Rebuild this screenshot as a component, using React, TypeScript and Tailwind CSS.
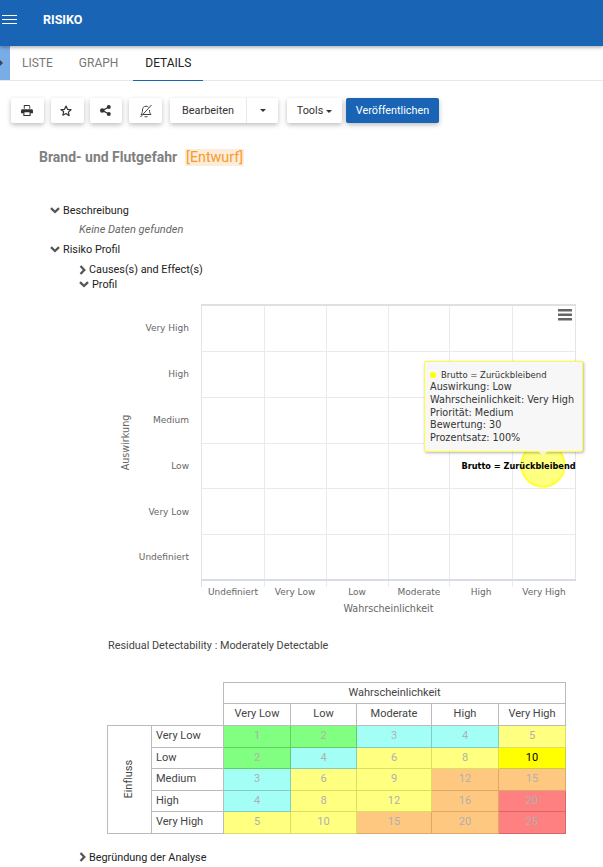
import React from 'react';

const cellColors: Record<string, string> = {
  g: 'bg-[#80ff80] border-[#66cc66]',
  c: 'bg-[#a3fff5] border-[#82ccc4]',
  y: 'bg-[#ffff80] border-[#dddd66]',
  o: 'bg-[#ffc880] border-[#dda866]',
  r: 'bg-[#ff8080] border-[#d96666]',
};

const columns = ['Very Low', 'Low', 'Moderate', 'High', 'Very High'];

const matrix: { label: string; cells: [number, string][] }[] = [
  { label: 'Very Low', cells: [[1, 'g'], [2, 'g'], [3, 'c'], [4, 'c'], [5, 'y']] },
  { label: 'Low', cells: [[2, 'g'], [4, 'c'], [6, 'y'], [8, 'y'], [10, 'x']] },
  { label: 'Medium', cells: [[3, 'c'], [6, 'y'], [9, 'y'], [12, 'o'], [15, 'o']] },
  { label: 'High', cells: [[4, 'c'], [8, 'y'], [12, 'y'], [16, 'o'], [20, 'r']] },
  { label: 'Very High', cells: [[5, 'y'], [10, 'y'], [15, 'o'], [20, 'o'], [25, 'r']] },
];

const colWidths = ['w-[67px]', 'w-[66px]', 'w-[75px]', 'w-[67px]', 'w-[67px]'];

const yLabels: [string, number][] = [
  ['Very High', 328],
  ['High', 374],
  ['Medium', 420],
  ['Low', 466],
  ['Very Low', 512],
  ['Undefiniert', 557],
];
const xLabels: [string, number][] = [
  ['Undefiniert', 233],
  ['Very Low', 295],
  ['Low', 357],
  ['Moderate', 419],
  ['High', 481],
  ['Very High', 544],
];
const xGrid = [264, 326, 388, 449, 512];
const yGrid = [351, 397, 443, 488, 534];

const PrintIcon = () => (
  <svg width="12" height="11" viewBox="0 0 13 12" fill="#333">
    <path d="M3 0h6l1 1v3H9V1.2H4V4H3zM1.5 4.5h10A1.5 1.5 0 0 1 13 6v3h-2.5v3h-8V9H0V6a1.500 1.500 0 0 1 1.500-1.500zM3.700 8v2.800h5.600V8z" />
  </svg>
);

const StarIcon = () => (
  <svg width="12" height="12" viewBox="0 0 24 24" fill="none" stroke="#333" strokeWidth="2.4" strokeLinejoin="round">
    <path d="M12 2l3 6.600 7 .8-5.200 4.800 1.400 7.200L12 17l-6.200 3.400 1.400-7.200L2 9.400l7-.8z" />
  </svg>
);

const ShareIcon = () => (
  <svg width="11" height="11" viewBox="0 0 11 11" fill="#333">
    <circle cx="2.200" cy="5.500" r="2.200" />
    <circle cx="8.800" cy="2" r="2" />
    <circle cx="8.800" cy="9" r="2" />
    <path d="M2 5l6.500-3.500.5 1L3 6zM3 5l6 3.500-.5 1L2 6z" />
  </svg>
);

const BellOffIcon = () => (
  <svg width="14" height="14" viewBox="0 0 14 14" fill="none" stroke="#444" strokeWidth="1">
    <path d="M3.500 6c0-2.200 1.300-3.800 3.500-3.800 1 0 1.800.3 2.400.9M10.500 6c0 2.500.5 3.500 1.500 4.500H4M3.500 6c0 2-.5 3.500-1.500 4.500H3.500M5.500 12c.3.700.9 1 1.500 1s1.200-.3 1.500-1" />
    <path d="M1.500 13L12.500 1" />
  </svg>
);

const Caret = () => (
  <span className="inline-block w-0 h-0 border-x-[3px] border-x-transparent border-t-[3px] border-t-[#333]" />
);

const ChevronOpen = () => (
  <svg width="10" height="7" viewBox="0 0 10 7" fill="none" stroke="#555" strokeWidth="2.300" className="mr-[3px] shrink-0">
    <path d="M1 1.200l4 3.800 4-3.800" />
  </svg>
);

const ChevronClosed = () => (
  <svg width="7" height="10" viewBox="0 0 7 10" fill="none" stroke="#555" strokeWidth="2.300" className="mr-[3px] shrink-0">
    <path d="M1.500 1l3.800 4-3.800 4" />
  </svg>
);

const toolButton = 'h-[25px] flex items-center justify-center bg-white rounded-[2px] shadow-[0_2px_5px_rgba(0,0,0,0.26)]';

const TreeRow = ({ open, label, className }: { open: boolean; label: string; className: string }) => (
  <div className={`flex items-center text-[10.850px] leading-[15px] text-[#222] ${className}`}>
    {open ? <ChevronOpen /> : <ChevronClosed />}
    <span>{label}</span>
  </div>
);

const RiskChart = () => (
  <svg width="603" height="340" viewBox="0 296 603 340" className="block" style={{ fontFamily: '"DejaVu Sans", sans-serif' }}>
    {xGrid.map((x) => (
      <line key={x} x1={x + 0.5} y1="306" x2={x + 0.5} y2="587" stroke="#eaeaea" />
    ))}
    {yGrid.map((y) => (
      <line key={y} x1="202" y1={y + 0.5} x2="575" y2={y + 0.5} stroke="#eaeaea" />
    ))}
    <rect x="201.500" y="305.500" width="374" height="274" fill="none" stroke="#e4e4e4" />
    <line x1="201" y1="305" x2="576" y2="305" stroke="#e0e0e0" strokeWidth="2" />
    <line x1="201" y1="580" x2="576" y2="580" stroke="#d8dcea" strokeWidth="2" />
    <line x1="201.500" y1="580" x2="201.500" y2="587" stroke="#d8dcea" />
    {yLabels.map(([t, y]) => (
      <text key={t} x="189" y={y + 3} textAnchor="end" fontSize="9" fill="#666">
        {t}
      </text>
    ))}
    {xLabels.map(([t, x]) => (
      <text key={t} x={x} y="595" textAnchor="middle" fontSize="9" fill="#666">
        {t}
      </text>
    ))}
    <text x="388.500" y="612" textAnchor="middle" fontSize="9.600" fill="#666">
      Wahrscheinlichkeit
    </text>
    <text transform="translate(129 442.500) rotate(-90)" textAnchor="middle" fontSize="9.600" fill="#666">
      Auswirkung
    </text>
    <circle cx="543" cy="465" r="23" fill="#ffff00" fillOpacity="0.2" />
    <circle cx="543" cy="465" r="21.500" fill="#ffff80" stroke="#ffff33" strokeWidth="2" />
    <text x="518.500" y="468.500" textAnchor="middle" fontSize="8.200" fontWeight="bold" fill="#000">
      Brutto = Zurückbleibend
    </text>
    <rect x="558" y="309" width="14" height="2.500" fill="#666" />
    <rect x="558" y="313.500" width="14" height="2.500" fill="#666" />
    <rect x="558" y="318" width="14" height="2.500" fill="#666" />
  </svg>
);

export default function App() {
  return (
    <div className="relative w-[603px] h-[867px] overflow-hidden bg-white font-['Roboto',sans-serif]">
      <header className="relative z-10 h-[46px] bg-[#1a64b5] shadow-[0_1px_4px_rgba(0,0,0,0.4)] flex items-start">
        <div className="w-[15px] ml-[2px] mt-[15px] flex flex-col gap-[3px]">
          <span className="h-px bg-white" />
          <span className="h-px bg-white" />
          <span className="h-px bg-white" />
        </div>
        <span className="ml-[26px] mt-[12px] leading-[15px] text-white text-[12.500px] font-bold">RISIKO</span>
      </header>

      <nav className="flex h-[35px] border-b border-[#e8e8e8]">
        <div className="w-[10px] bg-[#78ade8] flex items-center">
          <span className="w-0 h-0 border-y-[3px] border-y-transparent border-l-[3px] border-l-[#444]" />
        </div>
        <div className="pl-[12px] pr-[24px] flex items-center text-[12px] text-[#777]">LISTE</div>
        <div className="pl-[2px] pr-[15px] flex items-center text-[12px] text-[#777]">GRAPH</div>
        <div className="w-[70px] flex items-center justify-center text-[12px] text-[#222] border-b-[1.500px] border-[#1a64b5] h-[35px]">
          DETAILS
        </div>
      </nav>

      <div className="flex pl-[11px] pt-[17px]">
        <button className={`${toolButton} w-[33px] pr-[2px]`}><PrintIcon /></button>
        <button className={`${toolButton} w-[33px] ml-[7px] pr-[3px]`}><StarIcon /></button>
        <button className={`${toolButton} w-[32px] ml-[6px] pr-[2px]`}><ShareIcon /></button>
        <button className={`${toolButton} w-[33px] ml-[7px]`}><BellOffIcon /></button>
        <div className={`${toolButton} w-[108px] ml-[8px] text-[10.850px] text-[#333]`}>
          <span className="w-[77px] h-full pt-[1px] flex items-center justify-center border-r border-[#e8e8e8]">Bearbeiten</span>
          <span className="flex-1 flex items-center justify-center"><Caret /></span>
        </div>
        <button className={`${toolButton} w-[55px] ml-[9px] pt-[1px] gap-[3px] text-[10.850px] text-[#333]`}>
          Tools <Caret />
        </button>
        <button className={`${toolButton} w-[93px] ml-[4px] pt-[1px] !bg-[#1a64b5] text-white text-[10.850px]`}>
          Veröffentlichen
        </button>
      </div>

      <div className="pl-[39px] mt-[25px] flex items-center h-[18px]">
        <span className="text-[14px] leading-[18px] font-bold text-[#808080]">Brand- und Flutgefahr</span>
        <span className="ml-[8px] px-[1px] text-[14.300px] leading-[17px] bg-[#fdecd8] text-[#f79a2e]">[Entwurf]</span>
      </div>

      <TreeRow open label="Beschreibung" className="ml-[50px] mt-[37px]" />
      <div className="ml-[79px] mt-[4px] text-[11px] leading-[15px] italic text-[#666]">Keine Daten gefunden</div>
      <TreeRow open label="Risiko Profil" className="ml-[50px] mt-[5px]" />
      <TreeRow open={false} label="Causes(s) and Effect(s)" className="ml-[79px] mt-[5px]" />
      <TreeRow open label="Profil" className="ml-[79px] mt-0" />

      <div className="relative mt-[4px]">
        <RiskChart />
        <div className="absolute left-[424px] top-[65px] w-[159px] h-[91px] bg-[#f7f7f7] border border-[#ffff33] rounded-[2px] shadow-[1px_1px_3px_rgba(0,0,0,0.3)] pl-[5px] pt-[7px] text-[9.700px] leading-[12.800px] text-[#333] font-['DejaVu_Sans',sans-serif]">
          <div className="flex items-center h-[12px] text-[8.500px]">
            <span className="w-[6px] h-[6px] rounded-full bg-[#ffff00] mr-[5px]" />
            Brutto = Zurückbleibend
          </div>
          <div>Auswirkung: Low</div>
          <div>Wahrscheinlichkeit: Very High</div>
          <div>Priorität: Medium</div>
          <div>Bewertung: 30</div>
          <div>Prozentsatz: 100%</div>
          <span className="absolute left-[113px] top-[89px] w-0 h-0 border-x-[5px] border-x-transparent border-t-[5px] border-t-[#f7f7c0]" />
        </div>
      </div>

      <div className="ml-[108px] mt-[2px] text-[10.850px] leading-[15px] text-[#444]">
        Residual Detectability : Moderately Detectable
      </div>

      <table className="ml-[107px] mt-[29px] border-collapse table-fixed text-[11px] text-[#444] w-[459px]">
        <colgroup>
          <col className="w-[44px]" />
          <col className="w-[72px]" />
          {colWidths.map((w, i) => (
            <col key={i} className={w} />
          ))}
        </colgroup>
        <thead>
          <tr className="h-[21px]">
            <th colSpan={2} />
            <th colSpan={5} className="border border-[#bbb] font-normal">Wahrscheinlichkeit</th>
          </tr>
          <tr className="h-[22px]">
            <th colSpan={2} />
            {columns.map((c) => (
              <th key={c} className="border border-[#bbb] font-normal">{c}</th>
            ))}
          </tr>
        </thead>
        <tbody>
          {matrix.map((row, i) => (
            <tr key={row.label} className="h-[21.500px]">
              {i === 0 && (
                <td rowSpan={5} className="border border-[#bbb] text-center">
                  <span className="inline-block -rotate-90">Einfluss</span>
                </td>
              )}
              <td className="border border-[#bbb] pl-[4px]">{row.label}</td>
              {row.cells.map(([value, color], j) => (
                <td
                  key={j}
                  className={
                    color === 'x'
                      ? 'border border-[#cccc44] bg-[#ffff00] text-center text-black'
                      : `border text-center text-[#b0b0b0] ${cellColors[color]}`
                  }
                >
                  {value}
                </td>
              ))}
            </tr>
          ))}
        </tbody>
      </table>

      <TreeRow open={false} label="Begründung der Analyse" className="ml-[79px] mt-[16px]" />
    </div>
  );
}
